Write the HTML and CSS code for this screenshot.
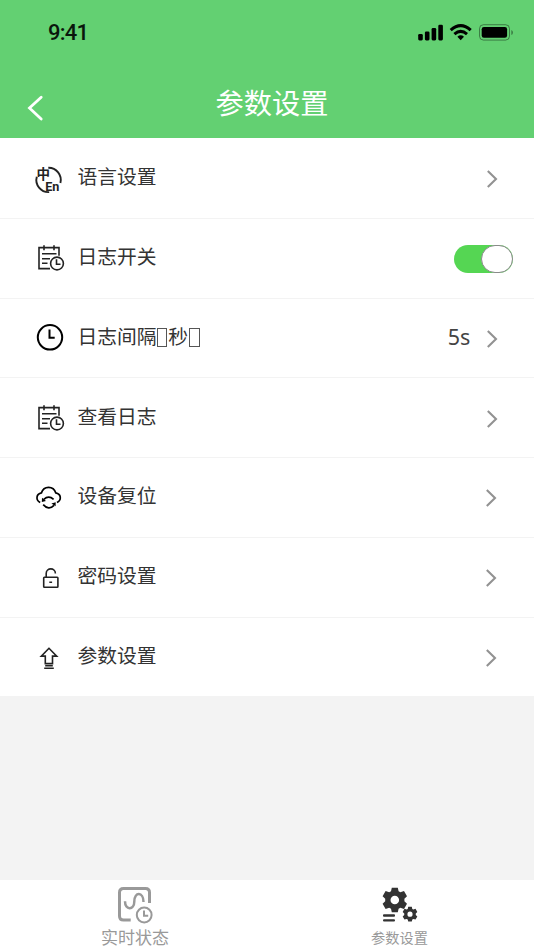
FILE: index.html
```html
<!DOCTYPE html>
<html lang="zh-CN">
<head>
<meta charset="utf-8">
<title>参数设置</title>
<link rel="stylesheet" href="styles.css">
</head>
<body>
<svg class="defs" width="0" height="0" aria-hidden="true">
  <symbol id="log" viewBox="0 0 40 40">
    <path d="M20 30.3H9V9.3H29V17.5M14 7v5M24 7v5M12 15.5h14.5M12 20.4h8M12 25h5.5"/>
    <circle cx="27" cy="25.2" r="6.4"/><path d="M26.5 21v5h4"/>
  </symbol>
  <symbol id="chevron" viewBox="0 0 12 20"><path d="M1.8 2 10 10 1.8 18"/></symbol>
</svg>
<header class="header">
  <div class="status">
    <span class="time">9:41</span>
    <svg class="signals" width="98" height="20" viewBox="0 0 98 20">
      <rect x="1.2" y="12" width="4.6" height="6.4" rx="1.3"/><rect x="7.9" y="9.5" width="4.6" height="8.9" rx="1.3"/><rect x="14.6" y="6" width="4.6" height="12.4" rx="1.3"/><rect x="21.3" y="2.8" width="4.6" height="15.6" rx="1.3"/>
      <path class="wave" d="M33.7 8.2Q43.7-1 53.7 8.2M37.4 12.1Q43.7 6.6 50 12.1"/>
      <path d="M40.4 14.7Q43.7 12 47 14.7L43.7 18.3Z"/>
      <rect class="shell" x="62.5" y="2.7" width="30" height="15.4" rx="4"/><rect x="64.7" y="5" width="25.4" height="10.8" rx="2.2"/>
      <path class="tip" d="M94.3 8v5q1.7-.5 1.7-2.5T94.3 8Z"/>
    </svg>
  </div>
  <div class="titlebar">
    <svg class="back" width="18" height="26" viewBox="0 0 18 26"><path d="M15.2 2.2 3.5 13 15.2 24"/></svg>
    <h1>参数设置</h1>
  </div>
</header>
<main class="list">
  <div class="row">
    <svg class="icon" viewBox="0 0 40 40"><path class="ring" d="M18.3 9.8A12.2 12.2 0 0 1 30.4 25M6.8 18.7A12.2 12.2 0 0 0 19.2 34.1"/><text class="zh" x="6.6" y="20.6">中</text><text class="en" x="15.2" y="32.6">En</text></svg>
    <span class="label">语言设置</span><svg class="chevron"><use href="#chevron"/></svg>
  </div>
  <div class="row">
    <svg class="icon" viewBox="0 0 40 40"><use href="#log" y=".3"/></svg>
    <span class="label">日志开关</span><span class="switch"><span class="knob"></span></span>
  </div>
  <div class="row">
    <svg class="icon bold" viewBox="0 0 40 40"><circle cx="20" cy="19.3" r="12.2"/><path d="M19.5 11.5v8.2h5.2"/></svg>
    <span class="label">日志间隔<i class="box"></i>秒<i class="box"></i></span><span class="value">5s</span><svg class="chevron"><use href="#chevron"/></svg>
  </div>
  <div class="row">
    <svg class="icon" viewBox="0 0 40 40"><use href="#log" y=".3"/></svg>
    <span class="label">查看日志</span><svg class="chevron"><use href="#chevron"/></svg>
  </div>
  <div class="row">
    <svg class="icon cloud" viewBox="0 0 40 40"><path d="M10.2 25.6C5.4 22.8 6.1 16.8 11.5 15.8C13.6 8.5 23.6 8.5 25.7 15.8C31.2 16.8 31.9 22.8 27 25.6M13.8 22.4Q18.7 18 23.6 22.4M13.2 27.6Q18.7 33.8 24 28.4"/><path class="solid" d="m12 20.8-.2 4.2 4.2-.9ZM25.6 29.2l.1-4-4.3 1.2Z"/></svg>
    <span class="label">设备复位</span><svg class="chevron narrow"><use href="#chevron"/></svg>
  </div>
  <div class="row">
    <svg class="icon" viewBox="0 0 40 40"><rect x="13.7" y="20.2" width="14.2" height="10" rx=".7"/><path d="M16.2 20v-3.6c0-6 9.2-6 9.2 0M19.3 25.2h2.8"/></svg>
    <span class="label">密码设置</span><svg class="chevron narrow"><use href="#chevron"/></svg>
  </div>
  <div class="row">
    <svg class="icon" viewBox="0 0 40 40"><path d="m19 11.3-7.7 7.8h4v7.5h7.2v-7.5h4.2ZM15.2 28.7h7.6M14.2 31.2h9.6"/></svg>
    <span class="label">参数设置</span><svg class="chevron narrow"><use href="#chevron"/></svg>
  </div>
</main>
<nav class="tabs">
  <div class="tab tab-status">
    <svg width="38" height="38" viewBox="0 0 38 38"><path d="M13.7 34H6.5Q2.5 34 2.5 30V6.5Q2.5 2.5 6.5 2.5H28.5Q32.5 2.5 32.5 6.5V17"/><path class="curve" d="M8 15.2C8 25 17.3 24 17.3 15.5C17.3 5.5 26.5 5.5 26.5 16"/><circle class="dial" cx="27.2" cy="29" r="7.4"/><path class="dial" d="M27 24.5v5.2h4.2"/></svg>
    <span>实时状态</span>
  </div>
  <div class="tab tab-params">
    <svg width="38" height="38" viewBox="0 0 38 38">
      <defs><path id="gear" fill-rule="evenodd" d="M-3-12.3H3L3.8-8.8 5.6-7.8 9.2-8.9 12.2-3.8 9.6-1.2V1.2L12.2 3.8 9.2 8.9 5.6 7.8 3.8 8.8 3 12.3H-3L-3.8 8.8-5.6 7.8-9.2 8.9-12.2 3.8-9.6 1.2V-1.2L-12.2-3.8-9.2-8.9-5.6-7.8-3.8-8.8ZM0-4.3A4.3 4.3 0 1 0 0 4.3 4.3 4.3 0 1 0 0-4.3Z"/></defs>
      <use href="#gear" transform="translate(13.8 14)"/><use href="#gear" transform="translate(29 28.2) scale(.6)"/>
      <rect x="2" y="28.3" width="12" height="2.4" rx="1"/><rect x="2" y="33.2" width="12" height="2.4" rx="1"/>
    </svg>
    <span>参数设置</span>
  </div>
</nav>
</body>
</html>
```
FILE: styles.css
```css
* { box-sizing: border-box; }
body {
  margin: 0;
  height: 950px;
  display: flex;
  flex-direction: column;
  background: #f3f3f3;
  color: #333;
  font-family: "Noto Sans CJK SC", sans-serif;
  overflow: hidden;
}
.defs { position: absolute; }
.header { height: 138px; background: #63d072; }
.status {
  display: flex;
  justify-content: space-between;
  padding: 22px 19px 0 48px;
  height: 66px;
}
.time { font: 500 22px/22px Roboto, sans-serif; letter-spacing: -.8px; color: #0a160c; }
.wave { fill: none; stroke: #000; stroke-width: 3; }
.shell { fill: none; stroke: #000; stroke-opacity: .4; }
.tip { opacity: .4; }
.titlebar {
  display: grid;
  grid-template-columns: 76px 1fr 66px;
  height: 72px;
}
.back {
  margin: 29px 0 0 26px;
  fill: none;
  stroke: #fff;
  stroke-width: 2.8;
  stroke-linecap: round;
}
h1 {
  margin: 15px 0 0;
  color: #fff;
  font-size: 28.2px;
  font-weight: 400;
  line-height: 42px;
  text-align: center;
}
.list { padding-top: 1px; background: #fff; }
.row {
  display: flex;
  align-items: center;
  height: 79.75px;
  padding: 0 36px 0 30px;
  border-bottom: 1.5px solid #f3f3f3;
}
.row:last-child { height: 78.5px; border: 0; }
.icon {
  width: 40px;
  height: 40px;
  margin-right: 7.5px;
  fill: none;
  stroke: #222;
  stroke-width: 1.6;
}
.icon.bold { stroke: #000; stroke-width: 2; }
.icon.cloud { stroke: #000; stroke-width: 1.7; }
.icon .ring { stroke-width: 1.9; }
.icon .solid { fill: #000; stroke: none; }
.icon text { fill: #222; stroke: none; font-weight: 700; }
.zh { font-size: 13.5px; }
.en { font-family: Roboto, sans-serif; font-size: 12.6px; }
.label {
  flex: 1;
  font-size: 19.8px;
  line-height: 30px;
  margin-top: -4px;
}
.box {
  display: inline-block;
  width: 10.5px;
  height: 18.5px;
  margin: 0 1px 0 0;
  border: 1px solid #555;
  vertical-align: -3px;
}
.box:last-child { margin-left: 1.5px; }
.value {
  margin: -2px 16px 0 0;
  font: 21.5px/30px "Noto Sans", sans-serif;
  color: #444;
}
.chevron {
  width: 12px;
  height: 20px;
  margin: 2px -.4px 0 0;
  fill: none;
  stroke: #929292;
  stroke-width: 2.1;
}
.chevron.narrow { margin-right: .9px; }
.switch {
  display: flex;
  justify-content: flex-end;
  width: 59px;
  height: 28.5px;
  margin: 2px -15px 0 0;
  border-radius: 15px;
  background: #55d653;
}
.knob {
  width: 32px;
  height: 28.5px;
  border: 1.5px solid #8a8a8a;
  border-radius: 15px;
  background: #fff;
}
.tabs {
  display: grid;
  grid-template-columns: 1fr 1fr;
  height: 70px;
  margin-top: auto;
  background: #fff;
}
.tab {
  display: flex;
  flex-direction: column;
  align-items: center;
  padding-top: 5px;
  color: #999;
}
.tab-status { padding-left: 3px; }
.tab-status svg { margin: .5px 0 0 2px; fill: none; stroke: #999; stroke-width: 3; }
.tab-status span { font-size: 17px; line-height: 26px; }
.tab-status .curve { stroke-width: 2.5; }
.tab-status .dial { stroke-width: 2; }
.tab-params { padding-right: 2px; }
.tab-params svg { margin: 1px 0 0 0; fill: #333; }
.tab-params span { font-size: 14.2px; line-height: 22px; margin-top: 2px; }
```
